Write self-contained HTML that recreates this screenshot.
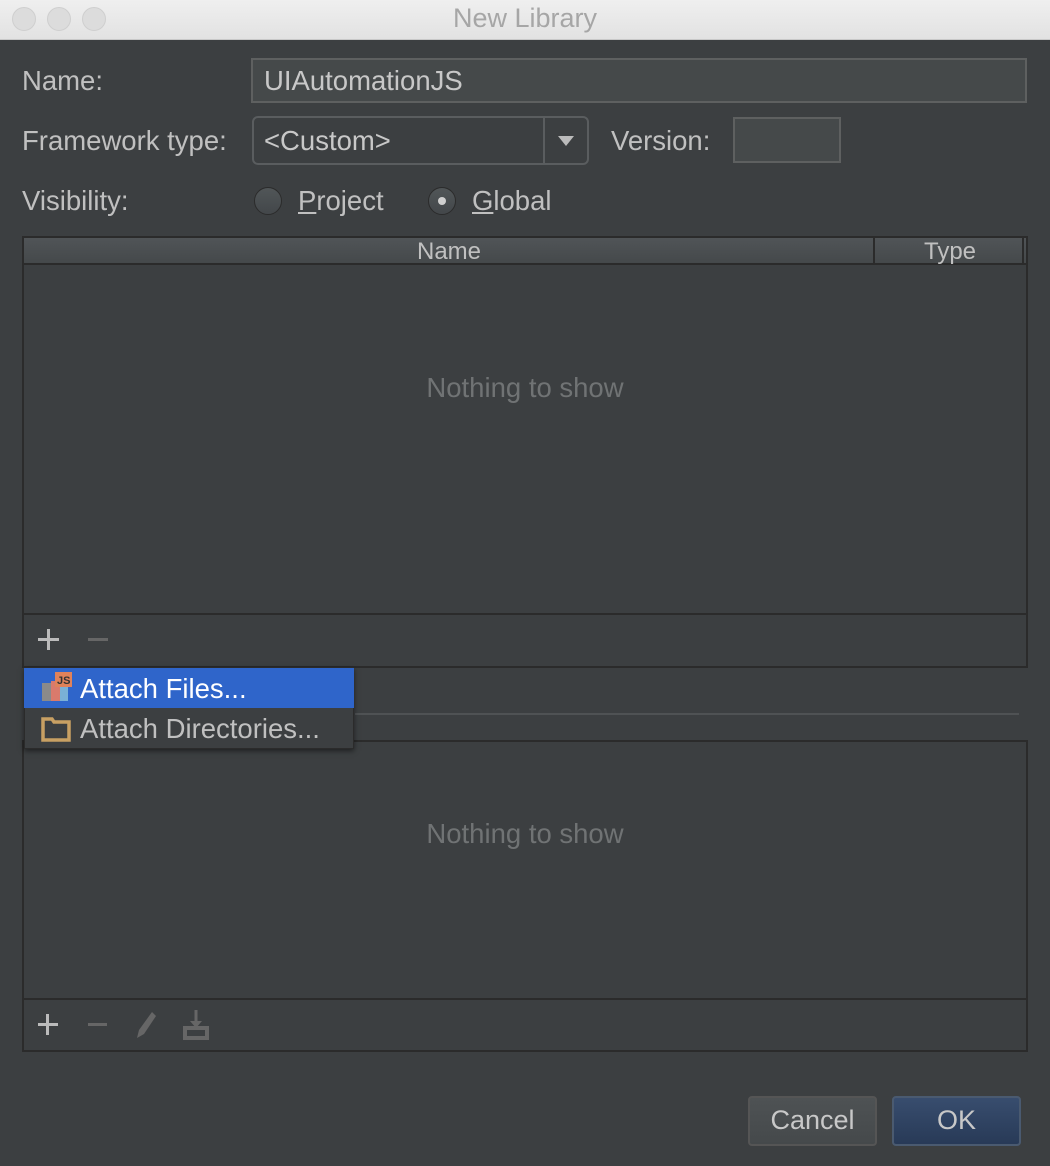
<!DOCTYPE html>
<html><head><meta charset="utf-8"><style>
*{box-sizing:border-box;margin:0;padding:0}
body{width:1050px;height:1166px;background:#3c3f41;font-family:"Liberation Sans",sans-serif;color:#bbbbbb;position:relative;overflow:hidden}
.a{position:absolute}
.t{font-size:27.5px;line-height:30px;color:#c0c0c0}
.tb{left:0;top:0;width:1050px;height:40px;background:linear-gradient(#efefef,#e2e2e2);border-bottom:1px solid #c8c8c8}
.dot{width:24px;height:24px;border-radius:50%;background:#dcdcdc;border:1px solid #cfcfcf;top:7px}
.field{background:#45494a;border:2px solid #5e6060}
.radio{width:28px;height:28px;border-radius:50%;background:linear-gradient(#515658,#43474a);border:1px solid #2b2b2b}
.panel{border:2px solid #2b2b2b;background:#3c3f41}
.nts{font-size:27.5px;color:#707374;width:100%;text-align:center}
.btn{border:2px solid #555;border-radius:4px;font-size:27px;text-align:center;line-height:45px;color:#c8c8c8}
</style></head><body>
<div class="a tb"></div>
<div class="a dot" style="left:12px"></div><div class="a dot" style="left:47px"></div><div class="a dot" style="left:82px"></div>
<div class="a" style="left:0;top:3px;width:1050px;text-align:center;font-size:27px;color:#a6a6a6;padding-left:0">New Library</div>

<div class="a t" style="left:22px;top:66px">Name:</div>
<div class="a field" style="left:251px;top:58px;width:776px;height:45px"></div>
<div class="a t" style="left:264px;top:66px;color:#c8c8c8">UIAutomationJS</div>

<div class="a t" style="left:22px;top:126px">Framework type:</div>
<div class="a" style="left:252px;top:116px;width:337px;height:49px;border:2px solid #5a5d5f;border-radius:6px;background:#3c3f41"></div>
<div class="a" style="left:543px;top:118px;width:2px;height:45px;background:#5a5d5f"></div>
<div class="a" style="left:558px;top:136px;width:0;height:0;border-left:8px solid transparent;border-right:8px solid transparent;border-top:10px solid #bbb"></div>
<div class="a t" style="left:264px;top:126px;color:#c8c8c8">&lt;Custom&gt;</div>
<div class="a t" style="left:611px;top:126px">Version:</div>
<div class="a field" style="left:733px;top:117px;width:108px;height:46px"></div>

<div class="a t" style="left:22px;top:186px">Visibility:</div>
<div class="a radio" style="left:254px;top:187px"></div>
<div class="a t" style="left:298px;top:186px"><u>P</u>roject</div>
<div class="a radio" style="left:428px;top:187px"></div>
<div class="a" style="left:438px;top:197px;width:8px;height:8px;border-radius:50%;background:#cfcfcf"></div>
<div class="a t" style="left:472px;top:186px"><u>G</u>lobal</div>

<div class="a panel" style="left:22px;top:236px;width:1006px;height:432px"></div>
<div class="a" style="left:24px;top:238px;width:1002px;height:27px;background:linear-gradient(#505457,#45494b);border-bottom:2px solid #2b2b2b"></div>
<div class="a" style="left:873px;top:238px;width:2px;height:25px;background:#2b2b2b"></div>
<div class="a" style="left:1022px;top:238px;width:2px;height:25px;background:#2b2b2b"></div>
<div class="a" style="left:24px;top:238px;width:850px;text-align:center;font-size:24px;line-height:28px;color:#c0c0c0">Name</div>
<div class="a" style="left:875px;top:238px;width:150px;text-align:center;font-size:24px;line-height:28px;color:#c0c0c0">Type</div>
<div class="a nts" style="left:0;top:372px;width:1050px">Nothing to show</div>
<div class="a" style="left:24px;top:613px;width:1002px;height:2px;background:#2b2b2b"></div>
<div class="a" style="left:38px;top:638px;width:21px;height:3px;background:#bbb"></div>
<div class="a" style="left:47px;top:629px;width:3px;height:21px;background:#bbb"></div>
<div class="a" style="left:88px;top:638px;width:20px;height:3px;background:#666"></div>

<div class="a" style="left:355px;top:713px;width:664px;height:2px;background:#4f5254"></div>

<div class="a panel" style="left:22px;top:740px;width:1006px;height:312px"></div>
<div class="a nts" style="left:0;top:818px;width:1050px">Nothing to show</div>
<div class="a" style="left:24px;top:998px;width:1002px;height:2px;background:#2b2b2b"></div>
<div class="a" style="left:38px;top:1023px;width:20px;height:3px;background:#bbb"></div>
<div class="a" style="left:46px;top:1014px;width:3px;height:21px;background:#bbb"></div>
<div class="a" style="left:88px;top:1023px;width:19px;height:3px;background:#666"></div>
<svg class="a" style="left:132px;top:1010px" width="30" height="30"><path d="M20 2 L24 6 L12 24 L5 28 L7 20 Z" fill="#666"/></svg>
<svg class="a" style="left:182px;top:1008px" width="30" height="32"><path d="M14 2 V18" stroke="#666" stroke-width="3"/><path d="M8 13 L14 20 L20 13Z" fill="#666"/><rect x="3" y="20" width="22" height="10" fill="none" stroke="#666" stroke-width="4"/></svg>

<div class="a" style="left:24px;top:667px;width:330px;height:82px;background:#3c3f41;border:1px solid #2b2b2b;box-shadow:0 2px 5px rgba(0,0,0,.5)"></div>
<div class="a" style="left:24px;top:668px;width:330px;height:40px;background:#2f65ca"></div>
<svg class="a" style="left:40px;top:671px" width="34" height="34"><rect x="2" y="12" width="9" height="18" fill="#8a8a8a"/><rect x="11" y="10" width="9" height="20" fill="#d97a6c"/><rect x="20" y="16" width="8" height="14" fill="#7ab0d6"/><rect x="15" y="1" width="17" height="15" fill="#e0825a"/><text x="17" y="13" font-size="11" font-family="Liberation Sans" font-weight="bold" fill="#333">JS</text></svg>
<div class="a t" style="left:80px;top:674px;color:#fff">Attach Files...</div>
<svg class="a" style="left:41px;top:716px" width="30" height="26"><path d="M2 3 H11 L13 6 H28 V24 H2 Z" fill="none" stroke="#c8a063" stroke-width="3.5"/></svg>
<div class="a t" style="left:80px;top:714px">Attach Directories...</div>

<div class="a btn" style="left:748px;top:1096px;width:129px;height:50px;background:linear-gradient(#4e5254,#45494b)">Cancel</div>
<div class="a btn" style="left:892px;top:1096px;width:129px;height:50px;background:linear-gradient(#384d6e,#283a57);border-color:#4a5a70">OK</div>
</body></html>
